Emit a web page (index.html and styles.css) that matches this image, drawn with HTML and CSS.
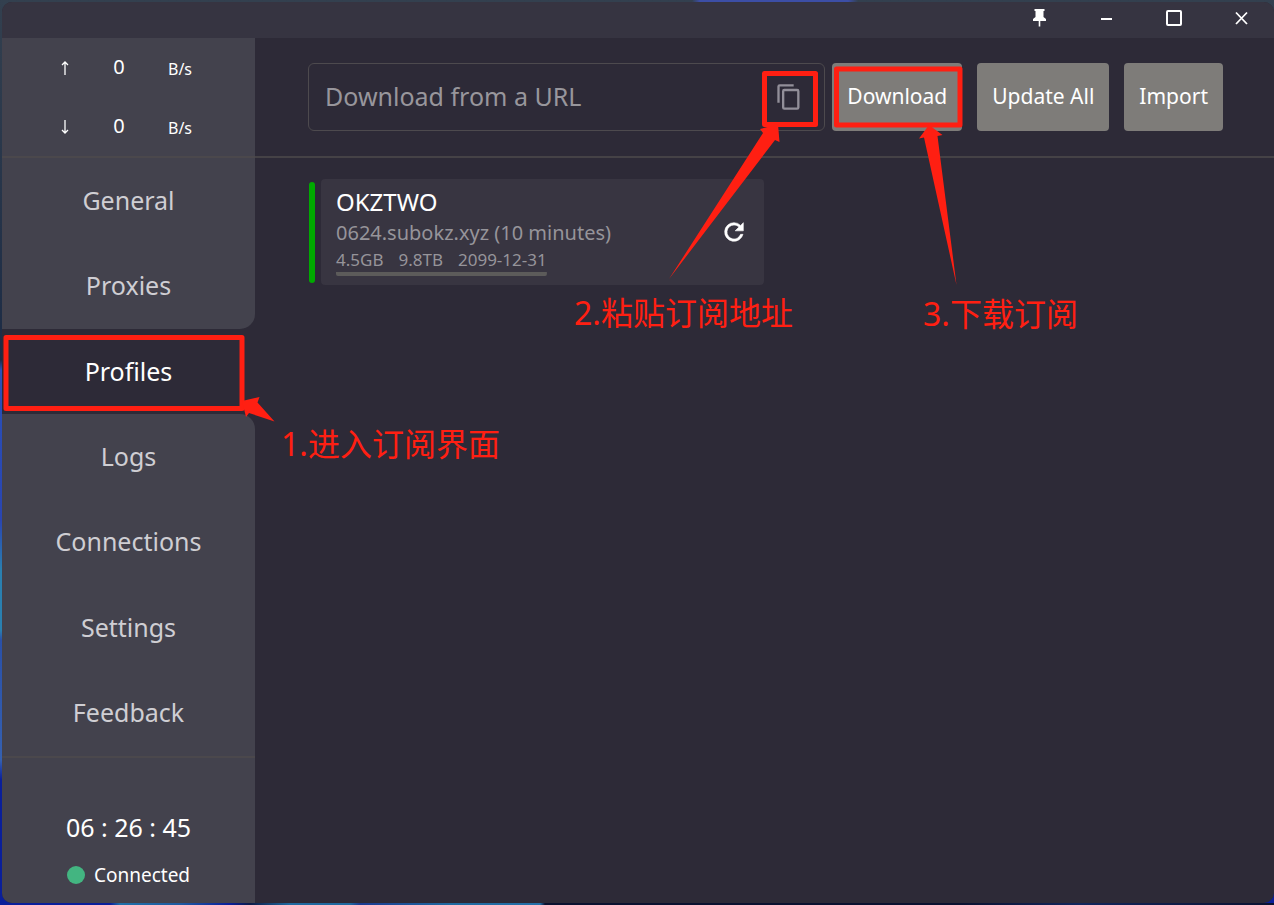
FILE: index.html
```html
<!DOCTYPE html>
<html lang="en">
<head>
<meta charset="utf-8">
<title>Profiles</title>
<link rel="stylesheet" href="styles.css">
</head>
<body>
<div class="window">
  <header class="titlebar">
    <button class="win-btn" aria-label="Pin"><svg width="20" height="20" viewBox="0 0 20 20"><path d="M4.500 1h10v2h-1v6l2.500 2v2h-5.700v5.500H8.700V13H3v-2l2.500-2V3h-1z" fill="#fff"/></svg></button>
    <button class="win-btn" aria-label="Minimize"><svg width="20" height="20" viewBox="0 0 20 20"><path d="M4 11h11" stroke="#fff" stroke-width="2"/></svg></button>
    <button class="win-btn" aria-label="Maximize"><svg width="20" height="20" viewBox="0 0 20 20"><rect x="3" y="3" width="14" height="14" rx="1" fill="none" stroke="#fff" stroke-width="2"/></svg></button>
    <button class="win-btn" aria-label="Close"><svg width="20" height="20" viewBox="0 0 20 20"><path d="M5 4.500l11 11.500M16 4.500L5 16" stroke="#fff" stroke-width="1.800"/></svg></button>
  </header>
  <div class="layout">
    <aside class="sidebar">
      <div class="traffic">
        <div class="traffic-row">
          <svg width="8" height="14" viewBox="0 0 8 14"><path d="M4 14V1.500M1 4l3-3 3 3" fill="none" stroke="#fff" stroke-width="1.300"/></svg>
          <span class="rate">0</span><span class="unit">B/s</span>
        </div>
        <div class="traffic-row">
          <svg width="8" height="14" viewBox="0 0 8 14"><path d="M4 0v12.500M1 10l3 3 3-3" fill="none" stroke="#fff" stroke-width="1.300"/></svg>
          <span class="rate">0</span><span class="unit">B/s</span>
        </div>
      </div>
      <nav class="nav">
        <a class="nav-item" href="#general">General</a>
        <a class="nav-item before-active" href="#proxies">Proxies</a>
        <a class="nav-item active" href="#profiles">Profiles</a>
        <a class="nav-item after-active" href="#logs">Logs</a>
        <a class="nav-item" href="#connections">Connections</a>
        <a class="nav-item" href="#settings">Settings</a>
        <a class="nav-item" href="#feedback">Feedback</a>
      </nav>
      <div class="status">
        <div class="clock">06 : 26 : 45</div>
        <div class="connection"><span class="dot"></span>Connected</div>
      </div>
    </aside>
    <main class="content">
      <div class="toolbar">
        <div class="url-box">
          <input class="url-input" type="text" placeholder="Download from a URL" aria-label="Download from a URL">
          <button class="paste-btn" aria-label="Paste"><svg width="28" height="28" viewBox="0 0 24 24"><path d="M16 1H4a2 2 0 0 0-2 2v14h2V3h12V1zm3 4H8a2 2 0 0 0-2 2v14a2 2 0 0 0 2 2h11a2 2 0 0 0 2-2V7a2 2 0 0 0-2-2zm0 16H8V7h11v14z" fill="#928f99"/></svg></button>
        </div>
        <div class="actions">
          <button class="btn">Download</button>
          <button class="btn">Update All</button>
          <button class="btn">Import</button>
        </div>
      </div>
      <div class="profiles">
        <article class="profile">
          <span class="marker"></span>
          <div class="card">
            <div class="card-info">
              <div class="card-name">OKZTWO</div>
              <div class="card-source">0624.subokz.xyz (10 minutes)</div>
              <div class="card-usage"><span>4.5GB</span><span>9.8TB</span><span>2099-12-31</span></div>
            </div>
            <button class="refresh" aria-label="Refresh"><svg width="28" height="28" viewBox="0 0 24 24"><path d="M17.650 6.350A7.960 7.960 0 0 0 12 4a8 8 0 1 0 7.730 10h-2.080A6 6 0 1 1 12 6c1.660 0 3.140.690 4.220 1.780L13 11h7V4z" fill="#fff" stroke="#fff" stroke-width=".5"/></svg></button>
          </div>
        </article>
      </div>
    </main>
  </div>
</div>
<div class="notes">
  <svg class="marks" width="1274" height="905" viewBox="0 0 1274 905">
    <g fill="none" stroke="#ff1f12" stroke-width="5" stroke-linejoin="round">
      <rect x="6" y="337.500" width="236" height="71"/>
      <rect x="764.500" y="73.500" width="51" height="51"/>
      <rect x="836.500" y="69" width="123.500" height="56"/>
    </g>
    <g fill="#ff1f12">
      <path d="M242 401l17.500-4-2 5.500L274.500 421.500 249 413l-3 4z"/>
      <path d="M778 124l1.500 18-4.500-2L669 279 763 133l-3-4z"/>
      <path d="M929 125l13.500 10-5 1L956.500 285 924 137.500l-5 1z"/>
    </g>
  </svg>
  <span class="note note-open">1.进入订阅界面</span>
  <span class="note note-paste">2.粘贴订阅地址</span>
  <span class="note note-download">3.下载订阅</span>
</div>
</body>
</html>
```
FILE: styles.css
```css
* { box-sizing: border-box; }
body {
  margin: 0;
  height: 100vh;
  padding: 2px 0 2px 2px;
  position: relative;
  overflow: hidden;
  display: flex;
  color: #fff;
  font-family: "Noto Sans", "Noto Sans CJK SC", sans-serif;
  background:
    linear-gradient(90deg, transparent 692px, #3c4ea6 700px, #3c4ea6 848px, transparent 858px) top / 100% 2px no-repeat,
    linear-gradient(90deg, #0a1f9a 110px, #1f70a8 120px, #1f5aa0 180px, #0a1f9a 230px, #0c1c48 250px, #1f6aa0 290px, #1f6aa0 350px, #1a3a90 360px, #1f6aa0 450px, #2470a8 540px, #0b1230 545px, #0b1230 960px, #12265c 1080px, #0b1230) bottom / 100% 2px no-repeat,
    linear-gradient(#33404f, #1c2b45 360px, #2950b8 370px, #2a45b0 520px, #2a80b0 570px, #2a80b0 630px, #2a50a8 640px, #3560b0 760px, #0a1f9a 780px);
}
button { border: 0; padding: 0; margin: 0; background: none; color: inherit; font: inherit; }
svg { display: block; }
.window {
  flex: 1;
  display: flex;
  flex-direction: column;
  overflow: hidden;
  border-radius: 10px;
  background: #2d2a37;
}
.titlebar { height: 36px; display: flex; justify-content: flex-end; background: #363441; }
.win-btn { width: 67px; height: 32px; display: grid; place-items: center; }
.layout { flex: 1; display: flex; min-height: 0; }
.sidebar { width: 253px; display: flex; flex-direction: column; }
.traffic {
  height: 120px;
  padding: 1px 0 0 36px;
  display: grid;
  grid-template-rows: 1fr 1fr;
  background: #43424d;
  border-bottom: 2px solid #4b484c;
}
.traffic-row { display: grid; grid-template-columns: 54px 54px 68px; place-items: center; }
.rate { font-size: 20px; line-height: 28px; padding-bottom: 2px; }
.unit { font-size: 16px; line-height: 22px; padding-top: 2px; }
.nav { flex: 1; display: flex; flex-direction: column; background: #2d2a37; }
.nav-item {
  flex: 1;
  display: grid;
  place-items: center;
  padding-bottom: 2px;
  background: #43424d;
  color: #cfced3;
  font-size: 25px;
  text-decoration: none;
}
.nav-item.active { background: #2d2a37; color: #fff; }
.before-active { border-bottom-right-radius: 15px; }
.after-active { border-top-right-radius: 15px; }
.status {
  height: 147px;
  padding-top: 51px;
  display: flex;
  flex-direction: column;
  align-items: center;
  gap: 16px;
  background: #43424d;
  border-top: 2px solid #4b484c;
}
.clock { font-size: 25px; line-height: 36px; }
.connection { display: flex; align-items: center; gap: 9px; font-size: 19px; line-height: 28px; }
.dot { width: 18px; height: 18px; border-radius: 50%; background: #43b581; }
.content { flex: 1; min-width: 0; }
.toolbar {
  height: 120px;
  padding: 25px 51px 25px 53px;
  display: flex;
  gap: 7px;
  border-bottom: 2px solid #454246;
}
.url-box { flex: 1; display: flex; border: 1px solid #4d4a4e; border-radius: 6px; }
.url-input {
  flex: 1;
  min-width: 0;
  padding: 0 16px 2px;
  border: 0;
  outline: 0;
  background: none;
  color: #fff;
  font: 25px "Noto Sans", sans-serif;
}
.url-input::placeholder { color: #98969c; opacity: 1; }
.paste-btn { width: 70px; display: grid; place-items: center; }
.actions { display: flex; gap: 15px; }
.btn {
  padding: 0 15px 2px;
  border-radius: 4px;
  background: #7e7c79;
  font-size: 21px;
}
.profiles { padding: 21px 54px; display: grid; grid-template-columns: 455px; }
.profile { display: flex; align-items: center; gap: 6px; }
.marker { width: 6px; height: 101px; border-radius: 3px; background: #00aa00; }
.card {
  flex: 1;
  height: 106px;
  padding: 6px 16px 0 15px;
  display: flex;
  justify-content: space-between;
  border-radius: 4px;
  background: #383541;
}
.card-info { display: flex; flex-direction: column; align-items: flex-start; }
.card-name { font-size: 24px; line-height: 34px; }
.card-source { color: #96949a; font-size: 20px; line-height: 28px; }
.card-usage {
  display: flex;
  gap: 15px;
  color: #96949a;
  font-size: 17px;
  line-height: 25px;
  padding-bottom: 4px;
  background: linear-gradient(#5c5b5a, #5c5b5a) bottom / 100% 4px no-repeat;
  border-radius: 2px;
}
.refresh { align-self: center; margin-bottom: 6px; }
.notes { position: absolute; inset: 0; overflow: hidden; pointer-events: none; }
.marks { position: absolute; left: 0; top: 0; }
.note {
  position: absolute;
  color: #ff1f12;
  font-family: "Noto Sans", "Noto Sans CJK SC", sans-serif;
  font-size: 32px;
  line-height: 40px;
  white-space: nowrap;
}
.note-open { left: 281px; top: 424px; }
.note-paste { left: 574px; top: 293px; }
.note-download { left: 923px; top: 294px; }
```
